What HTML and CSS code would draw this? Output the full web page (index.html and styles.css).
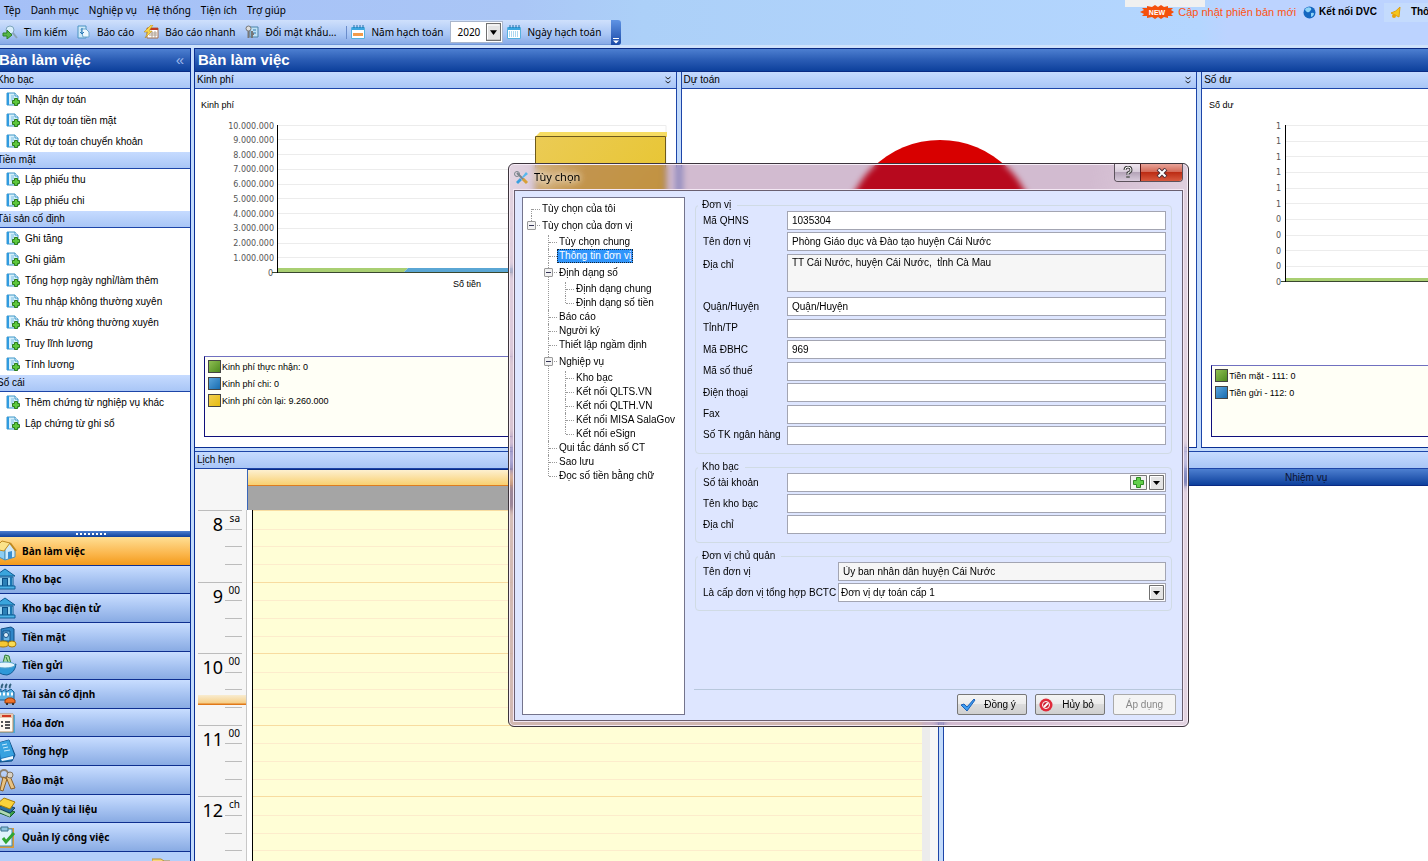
FILE: index.html
```html
<!DOCTYPE html>
<html lang="vi">
<head>
    <meta charset="UTF-8">
    <meta name="viewport" content="width=device-width, initial-scale=1.0">
    <title>Bàn làm việc</title>
    <link rel="stylesheet" href="styles.css">
</head>
<body>
    <!-- shared icons -->
    <svg class="sprite" aria-hidden="true">
        <symbol id="i-docadd" viewBox="0 0 15 15">
            <path d="M1 1h8l3 3v9H1z" fill="#d5effb" stroke="#3f97c8"/>
            <path d="M1 1h2v12H1z" fill="#2f9be0"/>
            <path d="M5 4h3M5 6h3M5 8h2" stroke="#7fbfe2"/>
            <path d="M9 1v3h3" fill="#fff" stroke="#3f97c8"/>
            <path d="M8.500 6.500h3v2h2v3h-2v2h-3v-2h-2v-3h2z" fill="#5cc83c" stroke="#2c7d1c"/>
        </symbol>
        <symbol id="i-bank" viewBox="0 0 24 24">
            <path d="M2 9L12 2l10 7z" fill="#3aa5dc" stroke="#0f5c94"/>
            <path d="M4 10h16v9H4z" fill="#9bd7f5" stroke="#0f5c94"/>
            <path d="M6 10v9M18 10v9" stroke="#1c78b4" stroke-width="2"/>
            <path d="M9 11h6v8H9z" fill="#0b4f86"/>
            <path d="M11 12v7M13 12v7" stroke="#4cb4e8"/>
            <path d="M2 19h20v3H2z" fill="#4cb4e8" stroke="#0f5c94"/>
        </symbol>
        <symbol id="i-arrow" viewBox="0 0 15 15">
            <path d="M0 0h15v15H0z" fill="#e4e4e4"/>
            <path d="M.5 14.500V.5h14v14z" fill="none" stroke="#707070"/>
            <path d="M1.500 13.500v-12h12" fill="none" stroke="#fff"/>
            <path d="M4 6h7l-3.500 4z" fill="#000"/>
        </symbol>
        <symbol id="i-cal" viewBox="0 0 14 14">
            <path d="M.5 2.500h13v11H.5z" fill="#fff" stroke="#56b0de"/>
            <path d="M1 2h12v3H1z" fill="#3aa6e0"/>
            <path d="M3 0v3M6 0v3M9 0v3M12 0v3" stroke="#1f6fa8"/>
        </symbol>
        <symbol id="i-more" viewBox="0 0 8 8">
            <path d="M1.500 1L4 3l2.500-2M1.500 5L4 7l2.500-2" fill="none" stroke="#222"/>
        </symbol>
    </svg>

    <!-- menu -->
    <header class="topbar">
        <nav class="menu">
            <a href="#">Tệp</a>
            <a href="#">Danh mục</a>
            <a href="#">Nghiệp vụ</a>
            <a href="#">Hệ thống</a>
            <a href="#">Tiện ích</a>
            <a href="#">Trợ giúp</a>
        </nav>
        <div class="notices">
            <span class="notch"></span>
            <svg class="new" viewBox="0 0 34 14"><path d="M0 7l4-2-2-2 5 0 0-2 5 1 3-2 3 2 3-2 3 2 4-1 0 2 5 0-2 2 3 2-3 2 2 2-5 0 0 2-4-1-3 2-3-2-3 2-3-2-5 1 0-2-5 0 2-2z" fill="#f4500b"/><text x="17" y="10">NEW</text></svg>
            <a class="update" href="#">Cập nhật phiên bản mới</a>
            <a class="dvc" href="#"><svg width="13" height="13" viewBox="0 0 13 13"><circle cx="6.500" cy="6.500" r="6" fill="#1467c0"/><path d="M2 3q3-3 6-1 1 2-1 3-1 2-3 1-2-1-2-3zM8 7q3-1 3 1-1 3-3 3z" fill="#8fd4f7"/></svg>Kết nối DVC</a>
            <a class="bell" href="#"><svg width="12" height="13" viewBox="0 0 12 13"><path d="M10 1l-1 10-8-4q5-1 9-6z" fill="#f7c61c" stroke="#e0a010"/><circle cx="4" cy="10" r="2" fill="#e8a20c"/></svg>Thông báo</a>
        </div>
    </header>

    <!-- toolbar -->
    <div class="toolbar">
        <button class="tool"><svg width="16" height="14" viewBox="0 0 16 14"><circle cx="8" cy="5" r="4" fill="#d8eefa" stroke="#7fa6bd"/><path d="M11 8l4 5" stroke="#8aa2b5" stroke-width="2"/><path d="M1 8h4V5l5 5-5 4v-3H1z" fill="#58b848" stroke="#2d8225"/></svg>Tìm kiếm</button>
        <button class="tool"><svg width="14" height="14" viewBox="0 0 14 14"><path d="M1 1h8v12H1z" fill="#cfe9f8" stroke="#4a93c2"/><path d="M4 4h5l3 3v5H6z" fill="#eef8fd" stroke="#6aa6cc"/><path d="M5 3v6M3 7l2 2 2-2" fill="none" stroke="#2878b8"/></svg>Báo cáo</button>
        <button class="tool"><svg width="15" height="14" viewBox="0 0 15 14"><path d="M3 3h11v10H3z" fill="#fff" stroke="#a8704a"/><path d="M3 3h11v2H3z" fill="#c23a22"/><path d="M5 8h8M5 10h8M8 6v7M11 6v7" stroke="#b0a090"/><path d="M7 0L0 7h4l-3 6 7-7H5l4-6z" fill="#fcd94a" stroke="#b08010" stroke-width=".5"/></svg>Báo cáo nhanh</button>
        <button class="tool"><svg width="14" height="14" viewBox="0 0 14 14"><path d="M5 2h8v10H5z" fill="#bfe2f6" stroke="#4a83a8"/><path d="M8 5h3M8 8h3" stroke="#2f78b0"/><circle cx="3.500" cy="3.500" r="2.500" fill="#ddd" stroke="#777"/><path d="M3.500 6v7M7 6v7M7 9h2" stroke="#777" stroke-width="2"/></svg>Đổi mật khẩu...</button>
        <span class="sep"></span>
        <label class="tool" for="year"><svg width="14" height="14"><use href="#i-cal"/><path d="M2 8h10v3H2z" fill="#f29b4a"/></svg>Năm hạch toán</label>
        <span class="year-box">
            <select id="year"><option>2020</option></select>
            <svg class="arrow" width="15" height="18" viewBox="0 0 15 15" preserveAspectRatio="none"><use href="#i-arrow"/></svg>
        </span>
        <button class="tool"><svg width="14" height="14"><use href="#i-cal"/><path d="M2 7h10M2 9h10M2 11h10" stroke="#58aee0" stroke-dasharray="1 1"/></svg>Ngày hạch toán</button>
        <button class="cap" aria-label="Tùy chỉnh"><svg width="6" height="6" viewBox="0 0 6 6"><path d="M0 .5h6" stroke="#fff"/><path d="M0 2.500h6l-3 3z" fill="#fff"/></svg></button>
    </div>

    <main class="shell">
        <!-- left column -->
        <aside class="sidebar">
            <h2 class="title">Bàn làm việc <span>«</span></h2>
            <h3 class="group">Kho bạc</h3>
            <ul class="tasks">
                <li><svg><use href="#i-docadd"/></svg><a href="#">Nhận dự toán</a></li>
                <li><svg><use href="#i-docadd"/></svg><a href="#">Rút dự toán tiền mặt</a></li>
                <li><svg><use href="#i-docadd"/></svg><a href="#">Rút dự toán chuyển khoản</a></li>
            </ul>
            <h3 class="group">Tiền mặt</h3>
            <ul class="tasks">
                <li><svg><use href="#i-docadd"/></svg><a href="#">Lập phiếu thu</a></li>
                <li><svg><use href="#i-docadd"/></svg><a href="#">Lập phiếu chi</a></li>
            </ul>
            <h3 class="group">Tài sản cố định</h3>
            <ul class="tasks">
                <li><svg><use href="#i-docadd"/></svg><a href="#">Ghi tăng</a></li>
                <li><svg><use href="#i-docadd"/></svg><a href="#">Ghi giảm</a></li>
                <li><svg><use href="#i-docadd"/></svg><a href="#">Tổng hợp ngày nghỉ/làm thêm</a></li>
                <li><svg><use href="#i-docadd"/></svg><a href="#">Thu nhập không thường xuyên</a></li>
                <li><svg><use href="#i-docadd"/></svg><a href="#">Khấu trừ không thường xuyên</a></li>
                <li><svg><use href="#i-docadd"/></svg><a href="#">Truy lĩnh lương</a></li>
                <li><svg><use href="#i-docadd"/></svg><a href="#">Tính lương</a></li>
            </ul>
            <h3 class="group">Sổ cái</h3>
            <ul class="tasks">
                <li><svg><use href="#i-docadd"/></svg><a href="#">Thêm chứng từ nghiệp vụ khác</a></li>
                <li><svg><use href="#i-docadd"/></svg><a href="#">Lập chứng từ ghi sổ</a></li>
            </ul>
            <div class="grip"><span></span></div>
            <nav class="modules">
                <a class="active" href="#"><svg viewBox="0 0 24 24"><path d="M3 11l9-3v13l-8-4z" fill="#8ccdf2" stroke="#4a90bb"/><path d="M12 21V8l5-4 5 7v7z" fill="#cfeafa" stroke="#4a90bb"/><path d="M1 10l8-8 8 2-6 8z" fill="#fbe28a" stroke="#bf8a22"/><path d="M17 4l6 8" stroke="#bf8a22" stroke-width="2"/><path d="M15 13l4-1v7l-4 1z" fill="#3a8ed0"/></svg>Bàn làm việc</a>
                <a href="#"><svg><use href="#i-bank"/></svg>Kho bạc</a>
                <a href="#"><svg><use href="#i-bank"/></svg>Kho bạc điện tử</a>
                <a href="#"><svg viewBox="0 0 24 24"><path d="M8 4l10-2 3 2v13l-3 3H8z" fill="#2f86c8" stroke="#124f86"/><path d="M10 6h7v10h-7z" fill="#69b5e6" stroke="#124f86"/><circle cx="13" cy="10" r="2.500" fill="#ddeefa" stroke="#124f86"/><ellipse cx="10" cy="19" rx="6" ry="3" fill="#f5c832" stroke="#a87808"/><ellipse cx="19" cy="19" rx="4" ry="3" fill="#f9dc55" stroke="#a87808"/></svg>Tiền mặt</a>
                <a href="#"><svg viewBox="0 0 24 24"><path d="M10 10l2-8 4 1 2 8z" fill="#a8dca0" stroke="#2c7a38"/><path d="M13 4l2 5" stroke="#2c7a38"/><path d="M2 12q10 4 21-1-1 9-9 11Q4 22 2 12z" fill="#2e98d8" stroke="#115a94"/><ellipse cx="12" cy="12" rx="10" ry="3" fill="#e4f5fd" stroke="#5aa5cc"/></svg>Tiền gửi</a>
                <a href="#"><svg viewBox="0 0 24 24"><path d="M3 10l5-3v3l5-3v3l5-3 3 3v8H3z" fill="#5ab2e2" stroke="#155f96"/><path d="M9 6q-1-2 1-4M13 6q-1-2 1-4M17 6q-1-2 1-4" fill="none" stroke="#33617e" stroke-width="2"/><path d="M6 12h2M10 12h2M14 12h2M18 12h2" stroke="#fff" stroke-width="3"/><path d="M12 18l3-2h4l3 2v3H12z" fill="#f0742a" stroke="#9a3a08"/><path d="M13 22h2M19 22h2" stroke="#333" stroke-width="2"/></svg>Tài sản cố định</a>
                <a href="#"><svg viewBox="0 0 24 24"><path d="M4 4h18v18H4z" fill="#4fa8d6"/><path d="M3 3h17v18H3z" fill="#fffaf0" stroke="#b58a60"/><path d="M3 3h17v4H3z" fill="#e8c8b0"/><path d="M9 5h9" stroke="#d03a22" stroke-width="2"/><path d="M8 11h2M8 15h2M12 11h5M12 14h5M12 17h5" stroke="#555" stroke-width="2"/></svg>Hóa đơn</a>
                <a href="#"><svg viewBox="0 0 24 24"><path d="M5 4l11-3 6 15-3 6-12 1z" fill="#1f78bc" stroke="#0e4f86"/><path d="M5 4l11-3 5 15-13 3z" fill="#38a2e0"/><path d="M8 20l12-3v3l-11 2z" fill="#eef8ff"/><path d="M9 6l5-1M10 9l5-1M11 12l6-1" stroke="#c8ecff"/></svg>Tổng hợp</a>
                <a href="#"><svg viewBox="0 0 24 24"><circle cx="11" cy="6" r="4" fill="none" stroke="#8d8270" stroke-width="2"/><path d="M10 9l-3 13 3 1 4-12zM13 9l5 12 4-1-5-12z" fill="#e8c282" stroke="#8a6028"/><circle cx="17" cy="7" r="3" fill="#d8d2c6" stroke="#7d7262"/></svg>Bảo mật</a>
                <a href="#"><svg viewBox="0 0 24 24"><path d="M4 15l13 5 5-5-10-4z" fill="#3a9e48" stroke="#14592a"/><path d="M4 11l13 5 5-5-10-4z" fill="#2d6f9e" stroke="#153e60"/><path d="M4 7l13 5 5-7-11-4z" fill="#fbd23a" stroke="#a57a08"/><path d="M4 11v3l13 6v-3z" fill="#fff" opacity=".6"/></svg>Quản lý tài liệu</a>
                <a href="#"><svg viewBox="0 0 24 24"><path d="M5 3h16v20H5z" fill="#d89a3a"/><path d="M4 4h15v17H4z" fill="#dff3fc" stroke="#3d8fba"/><path d="M8 2h7v4H8z" fill="#8fc4de" stroke="#39718e"/><path d="M10 13l3 4 8-9" fill="none" stroke="#2fa534" stroke-width="3"/></svg>Quản lý công việc</a>
            </nav>
            <div class="modules-foot"><svg width="18" height="14" viewBox="0 0 18 14"><path d="M0 1h9l3 2h6v11H0z" fill="#f8d878" stroke="#b89030"/><circle cx="11" cy="8" r="4" fill="#e6f3fb" stroke="#88a"/></svg></div>
        </aside>

        <!-- dashboard -->
        <section class="desk">
            <h1 class="title">Bàn làm việc</h1>
            <div class="panels">
                <article class="panel">
                    <h3 class="group">Kinh phí <svg width="8" height="8"><use href="#i-more"/></svg></h3>
                    <svg class="chart" width="480" height="230" viewBox="195 89 480 230">
                        <defs>
                            <linearGradient id="gold" x2="1" y2="1"><stop offset="0" stop-color="#ebcb55"/><stop offset="1" stop-color="#e6c321"/></linearGradient>
                        </defs>
                        <text class="caption" x="201" y="108">Kinh phí</text>
                        <g class="rules">
                            <path d="M278 125.500h388v147M278 139.500h388M278 154.500h388M278 169.500h388M278 184.500h388M278 198.500h388M278 213.500h388M278 228.500h388M278 243.500h388M278 257.500h388"/>
                        </g>
                        <g class="ticks">
                            <text x="274" y="129">10.000.000</text><text x="274" y="143">9.000.000</text>
                            <text x="274" y="158">8.000.000</text><text x="274" y="172">7.000.000</text>
                            <text x="274" y="187">6.000.000</text><text x="274" y="202">5.000.000</text>
                            <text x="274" y="217">4.000.000</text><text x="274" y="231">3.000.000</text>
                            <text x="274" y="246">2.000.000</text><text x="274" y="261">1.000.000</text>
                            <text x="273" y="276">0</text>
                        </g>
                        <path d="M278 268h130l-4 4H278z" fill="#a9cf72"/>
                        <path d="M408 268h129v4H404z" fill="#5aa6d4"/>
                        <path d="M536 136l4-4h127v5z" fill="#f6dc62"/>
                        <path d="M535.500 136.500h130v136h-130z" fill="url(#gold)" stroke="#6e5a1c"/>
                        <path d="M272 272.500h394" stroke="#39482f"/>
                        <path d="M277.500 125v148" stroke="#000"/>
                        <text class="caption" x="453" y="287">Số tiền</text>
                    </svg>
                    <ul class="legend">
                        <li><i class="green"></i>Kinh phí thực nhận: 0</li>
                        <li><i class="blue"></i>Kinh phí chi: 0</li>
                        <li><i class="gold"></i>Kinh phí còn lại: 9.260.000</li>
                    </ul>
                </article>
                <article class="panel">
                    <h3 class="group">Dự toán <svg width="8" height="8"><use href="#i-more"/></svg></h3>
                    <svg class="chart" width="515" height="260" viewBox="681 89 515 260"><circle cx="939" cy="236" r="96" fill="#d80000"/></svg>
                </article>
                <article class="panel">
                    <h3 class="group">Số dư</h3>
                    <svg class="chart" width="226" height="230" viewBox="1202 89 226 230">
                        <text class="caption" x="1209" y="108">Số dư</text>
                        <g class="rules">
                            <path d="M1286 125.500h142M1286 141.500h142M1286 156.500h142M1286 172.500h142M1286 188.500h142M1286 203.500h142M1286 219.500h142M1286 235.500h142M1286 250.500h142M1286 266.500h142"/>
                        </g>
                        <g class="ticks">
                            <text x="1281" y="129">1</text><text x="1281" y="144">1</text><text x="1281" y="160">1</text>
                            <text x="1281" y="175">1</text><text x="1281" y="191">1</text><text x="1281" y="207">1</text>
                            <text x="1281" y="222">0</text><text x="1281" y="238">0</text><text x="1281" y="254">0</text>
                            <text x="1281" y="269">0</text><text x="1281" y="285">0</text>
                        </g>
                        <path d="M1286 278h142v4h-142z" fill="#a9cf72"/>
                        <path d="M1281 281.500h147" stroke="#39482f"/>
                        <path d="M1285.500 125v157" stroke="#000"/>
                    </svg>
                    <ul class="legend bleed">
                        <li><i class="green"></i>Tiền mặt - 111: 0</li>
                        <li><i class="blue"></i>Tiền gửi - 112: 0</li>
                    </ul>
                </article>
            </div>
            <div class="lower">
                <article class="panel">
                    <h3 class="group">Lịch hẹn</h3>
                    <div class="calendar">
                        <div class="ruler-head"></div>
                        <div class="day-head"></div>
                        <div class="ruler">
                            <div class="hour"><b>8</b><div><span>sa</span><span></span><span></span><span></span></div></div>
                            <div class="hour"><b>9</b><div><span>00</span><span></span><span></span><span></span></div></div>
                            <div class="hour"><b>10</b><div><span>00</span><span></span><span></span><span></span></div></div>
                            <div class="hour"><b>11</b><div><span>00</span><span></span><span></span><span></span></div></div>
                            <div class="hour"><b>12</b><div><span>ch</span><span></span><span></span><span></span></div></div>
                            <div class="now"></div>
                        </div>
                        <div class="day">
                            <div class="slots"><i></i><i></i><i></i><i></i></div>
                            <div class="slots"><i></i><i></i><i></i><i></i></div>
                            <div class="slots"><i></i><i></i><i></i><i></i></div>
                            <div class="slots"><i></i><i></i><i></i><i></i></div>
                            <div class="slots"><i></i><i></i><i></i><i></i></div>
                        </div>
                    </div>
                </article>
                <article class="panel jobs">
                    <h3 class="group"></h3>
                    <h4>Nhiệm vụ</h4>
                </article>
            </div>
        </section>
    </main>

    <!-- options window -->
    <div class="dialog" role="dialog" aria-labelledby="dlg-title">
        <div class="dialog-bar">
            <svg width="15" height="15" viewBox="0 0 15 15"><path d="M3 3l9 9" stroke="#7a858c" stroke-width="2"/><circle cx="3" cy="4" r="2.500" fill="none" stroke="#7a858c"/><path d="M8 7l4-5 2 2-5 4z" fill="#58b8ee"/><path d="M2 12l4-4 2 2-4 4z" fill="#3a9fe0"/><path d="M9 9l4 4" stroke="#d8a038" stroke-width="3"/></svg>
            <h2 id="dlg-title">Tùy chọn</h2>
            <div class="win">
                <button class="help" aria-label="Trợ giúp"><svg width="10" height="13" viewBox="0 0 10 13"><path d="M2 4q0-3 3-3t3 3q0 2-3 3v2M5 10v2" fill="none" stroke="#444" stroke-width="3"/><path d="M2 4q0-3 3-3t3 3q0 2-3 3v2M5 10.500v1" fill="none" stroke="#fff"/></svg></button>
                <button class="close" aria-label="Đóng"><svg width="12" height="10" viewBox="0 0 12 10"><path d="M2 1l8 8M10 1L2 9" stroke="#503038" stroke-width="4"/><path d="M2.500 1.500l7 7M9.500 1.500l-7 7" stroke="#fff" stroke-width="2"/></svg></button>
            </div>
        </div>
        <form class="dialog-body">
            <ul class="tree">
                <li><span>Tùy chọn của tôi</span></li>
                <li><span class="branch"><i></i>Tùy chọn của đơn vị</span>
                    <ul>
                        <li><span>Tùy chọn chung</span></li>
                        <li><span><mark>Thông tin đơn vị</mark></span></li>
                        <li><span class="branch"><i></i>Định dạng số</span>
                            <ul>
                                <li><span>Định dạng chung</span></li>
                                <li><span>Định dạng số tiền</span></li>
                            </ul>
                        </li>
                        <li><span>Báo cáo</span></li>
                        <li><span>Người ký</span></li>
                        <li><span>Thiết lập ngầm định</span></li>
                        <li><span class="branch"><i></i>Nghiệp vụ</span>
                            <ul>
                                <li><span>Kho bạc</span></li>
                                <li><span>Kết nối QLTS.VN</span></li>
                                <li><span>Kết nối QLTH.VN</span></li>
                                <li><span>Kết nối MISA SalaGov</span></li>
                                <li><span>Kết nối eSign</span></li>
                            </ul>
                        </li>
                        <li><span>Qui tắc đánh số CT</span></li>
                        <li><span>Sao lưu</span></li>
                        <li><span>Đọc số tiền bằng chữ</span></li>
                    </ul>
                </li>
            </ul>
            <div class="fields">
                <fieldset>
                    <legend>Đơn vị</legend>
                    <div class="rows unit">
                        <div class="row"><label for="f1">Mã QHNS</label><input id="f1" type="text" value="1035304"></div>
                        <div class="row"><label for="f2">Tên đơn vị</label><input id="f2" type="text" value="Phòng Giáo dục và Đào tạo huyện Cái Nước"></div>
                        <div class="row tall"><label for="f3">Địa chỉ</label><textarea id="f3" readonly>TT Cái Nước, huyện Cái Nước,  tỉnh Cà Mau</textarea></div>
                        <div class="row"><label for="f4">Quận/Huyện</label><input id="f4" type="text" value="Quận/Huyện"></div>
                        <div class="row"><label for="f5">Tỉnh/TP</label><input id="f5" type="text"></div>
                        <div class="row"><label for="f6">Mã ĐBHC</label><input id="f6" type="text" value="969"></div>
                        <div class="row"><label for="f7">Mã số thuế</label><input id="f7" type="text"></div>
                        <div class="row"><label for="f8">Điện thoại</label><input id="f8" type="text"></div>
                        <div class="row"><label for="f9">Fax</label><input id="f9" type="text"></div>
                        <div class="row"><label for="f10">Số TK ngân hàng</label><input id="f10" type="text"></div>
                    </div>
                </fieldset>
                <fieldset>
                    <legend>Kho bạc</legend>
                    <div class="rows">
                        <div class="row"><label for="f11">Số tài khoản</label>
                            <span class="combo">
                                <select id="f11"><option></option></select>
                                <button class="plus" type="button" aria-label="Thêm"><svg width="17" height="15" viewBox="0 0 17 15"><path d="M.5.5h16v14H.5z" fill="#f2f2f2" stroke="#777"/><path d="M6.500 2.500h4v3h3v4h-3v3h-4v-3h-3v-4h3z" fill="#62cf4a" stroke="#2f8a24"/></svg></button>
                                <svg class="arrow" width="15" height="15"><use href="#i-arrow"/></svg>
                            </span>
                        </div>
                        <div class="row"><label for="f12">Tên kho bạc</label><input id="f12" type="text"></div>
                        <div class="row"><label for="f13">Địa chỉ</label><input id="f13" type="text"></div>
                    </div>
                </fieldset>
                <fieldset class="wide">
                    <legend>Đơn vị chủ quản</legend>
                    <div class="rows">
                        <div class="row"><label for="f14">Tên đơn vị</label><input id="f14" type="text" value="Ủy ban nhân dân huyện Cái Nước" readonly></div>
                        <div class="row"><label for="f15">Là cấp đơn vị tổng hợp BCTC</label>
                            <span class="combo">
                                <select id="f15"><option>Đơn vị dự toán cấp 1</option></select>
                                <svg class="arrow" width="15" height="15"><use href="#i-arrow"/></svg>
                            </span>
                        </div>
                    </div>
                </fieldset>
                <div class="actions">
                    <button class="btn" type="button"><svg width="16" height="14" viewBox="0 0 16 14"><path d="M1 7l3-1 3 3 7-8 1 1-8 11z" fill="#3d9cf0" stroke="#1a5fb8"/></svg><span>Đồng ý</span></button>
                    <button class="btn" type="button"><svg width="16" height="14" viewBox="0 0 16 14"><circle cx="8" cy="7" r="6.500" fill="#e02a3a"/><circle cx="8" cy="7" r="3.500" fill="#c81c2c" stroke="#fff"/><path d="M6 9l4-4" stroke="#fff" stroke-width="2"/></svg><span>Hủy bỏ</span></button>
                    <button class="btn small" type="button" disabled><span>Áp dụng</span></button>
                </div>
            </div>
        </form>
    </div>
</body>
</html>
```
FILE: styles.css
```css
*{
    margin:0;
    padding:0;
    box-sizing:border-box;
}
html,body{
    height:100%;
}
body{
    display:flex;
    flex-direction:column;
    position:relative;
    overflow:hidden;
    background:linear-gradient(90deg,#a5c0f7,#aac6f6 36%,#acd0f8 45%,#b4d6ff 84%,#bcd3ff 86%);
    font:10px/12px "Liberation Sans",Arial,sans-serif;
    color:#000;
}
a{
    color:inherit;
    text-decoration:none;
}
ul{
    list-style:none;
}
button,input,select,textarea{
    font:inherit;
    color:inherit;
}
svg{
    flex:none;
}
.sprite{
    position:absolute;
    width:0;
    height:0;
}

/* menu */
.topbar{
    display:flex;
    flex:none;
    height:20px;
    justify-content:space-between;
    font-family:"Noto Sans",sans-serif;
}
.menu{
    display:flex;
    align-items:center;
    gap:10px;
    padding-left:4px;
}
.notices{
    display:flex;
    align-items:center;
    height:24px;
    position:relative;
    margin-right:-34px;
    font-size:11px;
    font-family:"Liberation Sans",Arial,sans-serif;
    white-space:nowrap;
}
.notch{
    position:absolute;
    left:-15px;
    top:0;
    width:80px;
    height:7px;
    background:#f0f0f0;
}
.new{
    width:34px;
    height:14px;
    position:relative;
}
.new text{
    font:bold 7px "Liberation Sans",Arial,sans-serif;
    fill:#fff;
    text-anchor:middle;
}
.update{
    margin:0 7px 0 4px;
    color:#ff5210;
}
.dvc,.bell{
    display:flex;
    align-items:center;
    gap:3px;
    font-size:10px;
    font-weight:bold;
}
.bell{
    gap:9px;
    margin-left:7px;
    padding-left:6px;
    background:#c4dbfd;
    height:19px;
}

/* toolbar */
.toolbar{
    display:flex;
    flex:none;
    align-items:center;
    align-self:flex-start;
    height:25px;
    padding-left:2px;
    background:linear-gradient(#cfe0fc,#a9c6f5 60%,#88aae6);
    border-bottom:1px solid #6f96d8;
    border-radius:0 4px 4px 0;
    font-family:"Noto Sans",sans-serif;
}
.tool{
    display:flex;
    align-items:center;
    gap:6px;
    margin-right:10px;
    background:none;
    border:0;
    white-space:nowrap;
}
.sep{
    width:1px;
    height:13px;
    margin-right:4px;
    background:#6a8ccb;
}
.toolbar label.tool{
    margin-right:7px;
}
.year-box{
    position:relative;
    width:53px;
    height:22px;
    margin-right:4px;
}
.year-box select{
    width:100%;
    height:100%;
    padding-left:6px;
    appearance:none;
    background:#fff;
    border:1px solid #a9b6cc;
    border-radius:0;
}
.arrow{
    position:absolute;
    top:2px;
    right:2px;
    pointer-events:none;
}
.cap{
    width:10px;
    height:25px;
    padding-top:14px;
    border:0;
    border-radius:0 3px 3px 0;
    background:linear-gradient(#5f93e4,#1a4aa8);
}

/* shell */
.shell{
    display:flex;
    flex:1;
    min-height:0;
    border-top:3px solid #cfe2fb;
    background:#c3dbfb;
}
.sidebar{
    display:flex;
    flex:none;
    flex-direction:column;
    width:199px;
    margin-left:-8px;
    margin-right:3px;
    background:#fff;
    border-right:1px solid #0a2f94;
    overflow:hidden;
}
.title{
    display:flex;
    flex:none;
    justify-content:space-between;
    align-items:center;
    height:24px;
    padding:0 6px 0 3px;
    border-top:1px solid #0a2a84;
    border-bottom:1px solid #0a2a84;
    background:linear-gradient(#4d7fd0,#2a5cb4 50%,#0d409c);
    color:#fff;
    font-size:15px;
    line-height:20px;
}
.sidebar .title{
    padding-left:7px;
}
.title span{
    color:#9db9ec;
    font-weight:normal;
}
.group{
    display:flex;
    flex:none;
    align-items:center;
    justify-content:space-between;
    height:17px;
    padding:0 4px 0 2px;
    border-bottom:1px solid #1d45a8;
    background:linear-gradient(#c6dbff,#a9c6f6);
    font-size:10px;
    font-weight:normal;
    white-space:nowrap;
}
.sidebar .group{
    padding-left:5px;
}
.tasks li{
    display:flex;
    align-items:center;
    gap:4px;
    height:21px;
    padding-left:14px;
}
.tasks svg{
    width:15px;
    height:15px;
}
.tasks a{
    white-space:nowrap;
}
.grip{
    flex:none;
    height:6px;
    margin-top:auto;
    background:linear-gradient(#4d7fd0,#0d409c);
    text-align:center;
}
.grip span{
    display:block;
    width:31px;
    height:2px;
    margin:2px auto 0;
    background:repeating-linear-gradient(90deg,#fff 0 2px,transparent 2px 4px);
}
.modules{
    display:grid;
    flex:none;
    grid-auto-rows:1fr;
    height:315px;
}
.modules a{
    display:flex;
    align-items:center;
    gap:5px;
    padding-left:1px;
    border-bottom:1px solid #0e2f90;
    background:linear-gradient(#c8ddff,#a8c4f2 50%,#89abe3);
    font:bold 10px/14px "Noto Sans",sans-serif;
}
.modules a.active{
    background:linear-gradient(#ffdf94,#fbb64c 60%,#f39a1b);
}
.modules svg{
    width:24px;
    height:24px;
}
.modules-foot{
    flex:none;
    height:9px;
    padding:6px 20px 0;
    overflow:hidden;
    text-align:right;
    background:#b4cffa;
}

/* dashboard */
.desk{
    display:flex;
    flex:1;
    flex-direction:column;
    min-width:0;
    border-left:1px solid #0a2f94;
}
.panels{
    display:grid;
    flex:none;
    grid-template-columns:minmax(0,482fr) minmax(0,517fr) minmax(0,227fr);
    gap:4px;
    height:376px;
}
.panel{
    display:flex;
    flex-direction:column;
    min-width:0;
    background:#fff;
    border-right:1px solid #1d45a8;
    border-bottom:1px solid #0a2f94;
    overflow:hidden;
}
.panel + .panel{
    border-left:1px solid #1d45a8;
}
.panels .panel:last-child{
    border-right:0;
}
.chart{
    display:block;
}
.caption{
    font-size:9px;
}
.rules path{
    fill:none;
    stroke:#ececec;
}
.ticks text{
    font:8px "DejaVu Sans",sans-serif;
    fill:#555;
    text-anchor:end;
}
.legend{
    height:81px;
    margin:auto 8px 10px 9px;
    padding:1px 3px;
    background:#fffff6;
    border:1px solid #10107c;
    border-top-color:#7070c0;
    font-size:9px;
    white-space:nowrap;
}
.legend.bleed{
    height:72px;
    margin-right:-10px;
}
.legend li{
    display:flex;
    align-items:center;
    height:17px;
    gap:1px;
}
.legend i{
    width:13px;
    height:13px;
    border:1px solid #444;
}
.green{
    background:linear-gradient(135deg,#8fbf52,#4e8a1e);
}
.blue{
    background:linear-gradient(135deg,#5aa4dc,#176cb0);
}
.gold{
    background:linear-gradient(135deg,#f2cf50,#e6bc10);
}
.lower{
    display:grid;
    flex:1;
    grid-template-columns:minmax(0,744fr) minmax(0,485fr);
    gap:4px;
    margin-top:3px;
    min-height:0;
}
.lower .panel{
    border-bottom:0;
}
.lower .group{
    height:18px;
    border-top:1px solid #1d45a8;
}
.calendar{
    display:grid;
    grid-template-columns:52px 1fr;
    grid-template-rows:41px 358px;
    background:linear-gradient(90deg,#ececec 50%,#f6f6f6 50%) right/16px 100% no-repeat #fff;
}
.ruler-head{
    background:#f6f6f6;
}
.day-head{
    border-left:1px solid #3a66b8;
    border-top:1px solid #0a2a84;
    background:linear-gradient(#fdf0d0,#f9d070 15px,#dd7d20 15px,#dd7d20 16px,#a5a5a5 16px);
}
.ruler{
    display:grid;
    grid-auto-rows:1fr;
    position:relative;
    padding:0 4px 0 3px;
    background:#f6f6f6;
    border-right:1px solid #c8c8c8;
    font-family:"Noto Sans",sans-serif;
}
.hour{
    display:grid;
    grid-template-columns:27px 1fr;
    border-top:1px solid #bcbcbc;
}
.hour b{
    font-weight:normal;
    font-size:18px;
    line-height:26px;
    text-align:right;
    padding-right:2px;
}
.hour div{
    display:grid;
    grid-auto-rows:1fr;
}
.hour span{
    border-top:1px solid #bcbcbc;
    line-height:15px;
    text-align:right;
    padding-right:2px;
}
.hour span:first-child{
    border-top:0;
}
.now{
    position:absolute;
    left:3px;
    right:0;
    top:185px;
    height:10px;
    background:linear-gradient(#f8ecd0,#f7cf88 8px,#e07818 9px);
}
.day{
    display:grid;
    grid-auto-rows:1fr;
    margin:0 16px 0 5px;
    border-left:1px solid #000;
    background:#fffed6;
}
.slots{
    display:grid;
    grid-auto-rows:1fr;
    border-top:1px solid #f8dca0;
}
.slots i{
    border-top:1px solid #fdeccc;
}
.slots i:first-child{
    border-top:0;
}
.lower .panel + .panel{
    border-right:0;
}
.jobs h4{
    height:17px;
    padding-left:341px;
    border-bottom:1px solid #0a2a84;
    background:linear-gradient(#4d7fd0,#0d409c);
    font-size:10px;
    font-weight:normal;
    line-height:17px;
    color:#0b1230;
}

/* options window */
.dialog{
    display:flex;
    flex-direction:column;
    position:absolute;
    left:508px;
    top:163px;
    width:681px;
    height:564px;
    padding:0 5px 5px;
    border:1px solid #3c343c;
    border-radius:6px;
    box-shadow:inset 0 0 0 1px #f6ecf6;
    background:linear-gradient(100deg,rgba(255,255,255,.4),rgba(255,255,255,0) 10%,rgba(255,255,255,0) 75%,rgba(255,255,255,.35) 90%),rgba(105,30,98,.3);
    backdrop-filter:blur(3px);
}
.dialog-bar{
    display:flex;
    flex:none;
    align-items:center;
    gap:5px;
    height:26px;
}
.dialog-bar h2{
    font:11px/16px "Noto Sans",sans-serif;
    text-shadow:0 0 6px #fff,0 0 8px #fff;
}
.win{
    display:flex;
    align-self:flex-start;
    margin-left:auto;
    height:18px;
    border:1px solid #5c525c;
    border-top:0;
    border-radius:0 0 4px 4px;
    overflow:hidden;
}
.win button{
    display:flex;
    align-items:center;
    justify-content:center;
    border:0;
}
.help{
    width:25px;
    background:linear-gradient(#efe6ef,#d8ccda 45%,#b4a4b8 50%,#d8cadb);
}
.win .close{
    width:42px;
    border-left:1px solid #5a1818;
    background:linear-gradient(#e8a49a,#d46a58 45%,#bc2c14 50%,#d8593e);
}
.dialog-body{
    display:flex;
    flex:1;
    min-height:0;
    padding:6px 0 5px 7px;
    border:1px solid #6a5f70;
    box-shadow:0 0 0 1px #f4e8f4;
    background:#dee6ff;
}
.tree{
    flex:none;
    width:163px;
    padding:4px 0 0 2px;
    background:#fff;
    border:1px solid #74748c;
    white-space:nowrap;
}
.tree ul{
    padding-left:17px;
}
.tree li{
    position:relative;
}
.tree li::before{
    content:"";
    position:absolute;
    left:6px;
    top:0;
    bottom:0;
    border-left:1px dotted #999;
}
.tree li:last-child::before{
    bottom:auto;
    height:7px;
}
.tree > li:first-child::before{
    top:7px;
}
.tree span{
    display:flex;
    align-items:center;
    position:relative;
    height:14px;
    padding-left:17px;
}
.tree span::before{
    content:"";
    position:absolute;
    left:7px;
    top:7px;
    width:8px;
    border-top:1px dotted #999;
}
.tree .branch{
    height:19px;
}
.tree .branch::before{
    top:9px;
}
.tree i{
    position:absolute;
    left:2px;
    top:5px;
    width:9px;
    height:9px;
    border:1px solid #999;
    border-radius:1px;
    background:linear-gradient(#335,#335) center/5px 1px no-repeat #f2f2f2;
}
.tree mark{
    margin-left:-2px;
    padding:1px 2px;
    background:#3095fb;
    outline:1px dotted #123;
    outline-offset:-1px;
    color:#fff;
}
.fields{
    display:flex;
    flex:1;
    flex-direction:column;
    gap:7px;
    min-width:0;
    padding:2px 0 0 10px;
}
fieldset{
    flex:none;
    margin-right:10px;
    padding:0 5px 8px 7px;
    min-width:0;
    border:1px solid #d0dbe4;
    border-radius:4px;
}
legend{
    margin-left:-5px;
    padding:0 6px 0 4px;
}
.rows{
    display:flex;
    flex-direction:column;
    gap:2px;
}
.unit{
    height:234px;
    gap:0;
    justify-content:space-between;
}
.row{
    display:grid;
    grid-template-columns:84px 1fr;
    align-items:center;
    height:19px;
}
.wide .row{
    grid-template-columns:135px 1fr;
}
.tall{
    align-items:start;
    height:41px;
}
.tall label{
    padding-top:5px;
}
.row label{
    white-space:nowrap;
}
.row input,.row select,.row textarea{
    display:block;
    width:100%;
    height:19px;
    padding:0 4px;
    border:1px solid #a3a5b2;
    border-radius:0;
    background:#fff;
    outline:0;
}
.row textarea{
    height:38px;
    padding-top:2px;
    resize:none;
}
.row input:read-only,.row textarea:read-only{
    background:#f6f6f6;
}
.combo{
    position:relative;
}
.row select{
    appearance:none;
    padding-left:2px;
}
.plus{
    position:absolute;
    right:19px;
    top:2px;
    height:15px;
    border:0;
    background:none;
}
.actions{
    display:flex;
    align-items:flex-start;
    gap:8px;
    justify-content:flex-end;
    margin-top:auto;
    margin-left:-1px;
    padding:4px 6px 0 0;
    border-top:1px solid #b8c8dc;
}
.btn{
    display:flex;
    align-items:center;
    width:70px;
    height:21px;
    padding:0 2px;
    border:1px solid #777;
    border-radius:2px;
    background:linear-gradient(#f4f4f4,#ebebeb 50%,#dcdcdc 50%,#cfcfcf);
}
.btn span{
    flex:1;
    text-align:center;
}
.btn.small{
    width:63px;
    border-color:#aaa;
    background:#f4f4f4;
    color:#888;
}
```
